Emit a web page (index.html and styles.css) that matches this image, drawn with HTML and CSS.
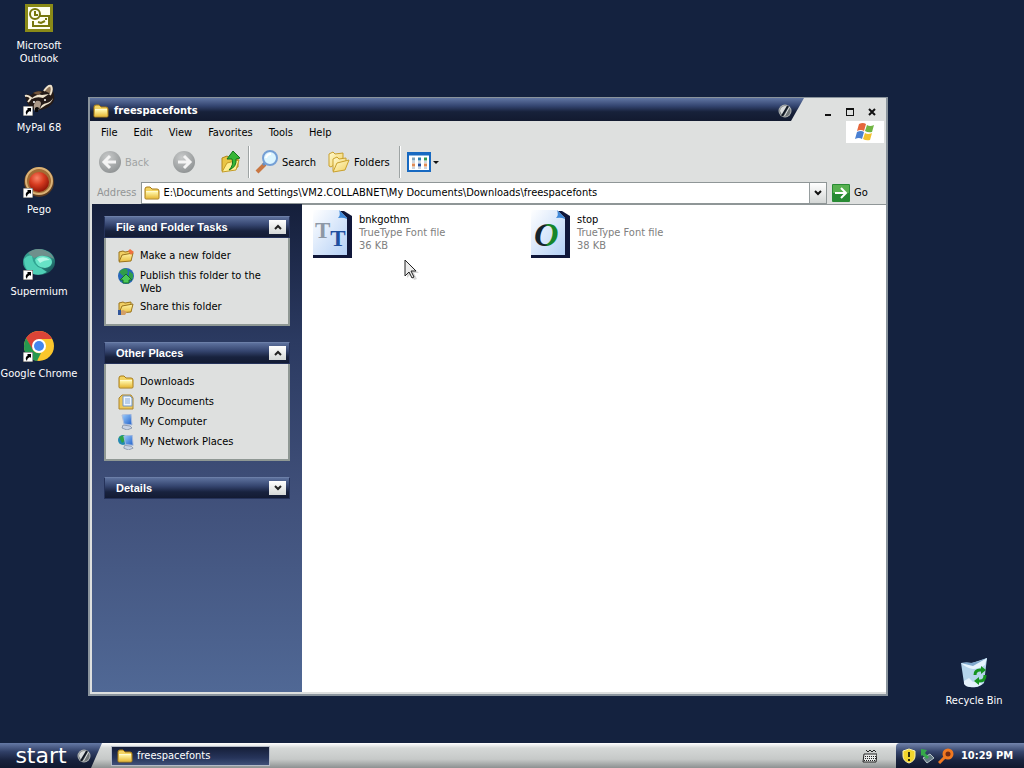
FILE: index.html
```
<!DOCTYPE html>
<html lang="en">
<head>
    <meta charset="UTF-8">
    <meta name="viewport" content="width=device-width, initial-scale=1.0">
    <title>freespacefonts</title>
    <link rel="stylesheet" href="styles.css">
</head>
<body>

    <!-- shared icons -->
    <svg class="defs" width="0" height="0" aria-hidden="true">
        <defs>
            <linearGradient id="gold" x1="0" y1="0" x2="0" y2="1">
                <stop offset="0" stop-color="#fff6a8"/><stop offset="1" stop-color="#e9bd3f"/>
            </linearGradient>
            <linearGradient id="pale-gold" x1="0" y1="0" x2="1" y2="1">
                <stop offset="0" stop-color="#fffbd2"/><stop offset="1" stop-color="#f2cf5c"/>
            </linearGradient>
            <linearGradient id="page" x1="0" y1="0" x2="1" y2="1">
                <stop offset="0" stop-color="#ffffff"/><stop offset="1" stop-color="#b4d0f6"/>
            </linearGradient>
            <radialGradient id="grey" cx=".4" cy=".3" r=".8">
                <stop offset="0" stop-color="#c9cbcb"/><stop offset="1" stop-color="#898d8e"/>
            </radialGradient>
            <radialGradient id="red" cx=".4" cy=".3" r=".7">
                <stop offset="0" stop-color="#f98468"/><stop offset=".5" stop-color="#d63b20"/><stop offset="1" stop-color="#8f1608"/>
            </radialGradient>
            <linearGradient id="teal" x1="0" y1="0" x2="1" y2="1">
                <stop offset="0" stop-color="#3a9489"/><stop offset=".5" stop-color="#2fa794"/><stop offset="1" stop-color="#143a45"/>
            </linearGradient>
            <linearGradient id="screen" x1="0" y1="0" x2="1" y2="1">
                <stop offset="0" stop-color="#9ed0ff"/><stop offset="1" stop-color="#2160c8"/>
            </linearGradient>
        </defs>
        <symbol id="folder" viewBox="0 0 16 16">
            <path d="M1 4q0-2 2-2h3l2 2h5q2 0 2 2v7q0 1-1 1H2q-1 0-1-1z" fill="#f3d463" stroke="#a87b16"/>
            <path d="M2 7h12v6H2z" fill="url(#gold)"/>
            <path d="M2 6.500h12" stroke="#fffbd0"/>
        </symbol>
        <symbol id="open-folder" viewBox="0 0 16 16">
            <path d="M1 13V4l4-1 2 1 6-1v4" fill="#f0cf63" stroke="#9b741b"/>
            <path d="M1 14l3-7 11-2-2 8z" fill="url(#gold)" stroke="#9b741b"/>
        </symbol>
        <symbol id="computer" viewBox="0 0 16 16">
            <path d="M4 1l9-1 1 11-8-1z" fill="url(#screen)" stroke="#a9bbdc"/>
            <path d="M5 11l7 1 2 2-5 2-5-2z" fill="#c9d3e4" stroke="#75849c" stroke-width=".7"/>
        </symbol>
        <symbol id="shortcut" viewBox="0 0 10 10">
            <path d="M0 0h10v10H0z" fill="#fff" stroke="#444"/>
            <path d="M4 2h4v4L7 5Q4 6 4 9 1 6 5 3z" fill="#000"/>
        </symbol>
        <symbol id="orb" viewBox="0 0 14 14">
            <circle cx="7" cy="7" r="6.500" fill="#aeb2b2"/>
            <circle cx="7" cy="7" r="5.500" fill="#717779"/>
            <path d="M2 7a5 5 0 0 1 8-4L4 11z" fill="#d9dcdc"/>
            <path d="M10 2l-6 10" stroke="#101722" stroke-width="2"/>
            <path d="M11.500 3l-5 9" stroke="#dfe2e2"/>
        </symbol>
        <symbol id="font-page" viewBox="0 0 40 48">
            <path d="M1 1h31l8 5v42H1z" fill="#10173a"/>
            <path d="M1 0h26l8 8v37H1z" fill="url(#page)"/>
            <path d="M27 0q2 5-1 8 5-1 9 1V8z" fill="#3f88d8"/>
        </symbol>
    </svg>

    <main class="desktop">
        <nav class="shortcuts" aria-label="Desktop">
            <a class="shortcut" href="#outlook">
                <svg width="32" height="32" viewBox="0 0 32 32">
                    <path d="M2 2h28v28H2z" fill="#8a8a17"/>
                    <path d="M5 5h22v22H5z" fill="#fffff0"/>
                    <path d="M16 14h10v10H10v-5" fill="none" stroke="#77770c" stroke-width="2"/>
                    <circle cx="12" cy="12" r="5" fill="#fffff0" stroke="#77770c" stroke-width="2"/>
                    <path d="M12 9v4h3M15 20l3 1 4-2M22 17h2" fill="none" stroke="#77770c" stroke-width="2"/>
                </svg>
                <span>Microsoft Outlook</span>
            </a>
            <a class="shortcut" href="#mypal">
                <svg width="32" height="32" viewBox="0 0 32 32">
                    <path d="M2 12q2-3 6-1 5-5 12-4 3-5 7-6 4 0 3 6 3 9-1 13-6 6-14 6-9-1-11-8z" fill="#241a17"/>
                    <path d="M22 7q3-5 6-5 2 3 0 8z" fill="#8e7458"/>
                    <path d="M21 7q4-6 7-5 2 4-1 9M2 12q3-1 6 2l-3 4" fill="none" stroke="#efe3cd" stroke-width="2"/>
                    <path d="M9 14q6-5 10-3l7-1-6 4q-6-2-11 1z" fill="#efe3cd"/>
                    <path d="M30 14q-1 5-7 7l-6 4q1-5 7-6 4-1 6-5z" fill="#efe3cd"/>
                    <path d="M10 9q5-3 9-1l-4 3z" fill="#74563c"/>
                    <path d="M13 17q5-1 5 3l-2 6-4 1q-3-5 1-10z" fill="#ab9887"/>
                    <path d="M12 24q2-2 4 0l-1 4h-3z" fill="#0b0909"/>
                    <circle cx="22" cy="16" r="1" fill="#fff"/><circle cx="11" cy="18" r="1" fill="#fff"/>
                    <use href="#shortcut" x="0" y="22" width="10" height="10"/>
                </svg>
                <span>MyPal 68</span>
            </a>
            <a class="shortcut" href="#pego">
                <svg width="32" height="32" viewBox="0 0 32 32">
                    <circle cx="16" cy="16" r="15" fill="#5b3b21"/>
                    <circle cx="16" cy="15" r="13" fill="#a16c35" stroke="#dab276" stroke-width="2"/>
                    <circle cx="16" cy="16" r="10" fill="url(#red)"/>
                    <use href="#shortcut" x="0" y="22" width="10" height="10"/>
                </svg>
                <span>Pego</span>
            </a>
            <a class="shortcut" href="#supermium">
                <svg width="32" height="32" viewBox="0 0 32 32">
                    <ellipse cx="16" cy="14" rx="16" ry="13" fill="url(#teal)"/>
                    <path d="M5 5q10-8 22 0 3 3 4 6-9-6-20-1z" fill="#6f8f8c"/>
                    <path d="M1 11q4-5 8-3 1 10 9 12l6 4q-8 5-16 1-7-4-7-14z" fill="#4fcfb5"/>
                    <path d="M12 12q3-5 9-4 8 1 8 6 0 5-7 6-9-1-10-8z" fill="#67e3c6"/>
                    <path d="M14 11q7-4 13 1-6 0-10 3z" fill="#b1f7e6"/>
                    <use href="#shortcut" x="0" y="22" width="10" height="10"/>
                </svg>
                <span>Supermium</span>
            </a>
            <a class="shortcut" href="#chrome">
                <svg width="32" height="32" viewBox="0 0 32 32">
                    <circle cx="16" cy="16" r="15" fill="#fbc62c"/>
                    <path d="M3 8Q8 1 16 1q9 0 13 8H16l-7 11z" fill="#dc4437"/>
                    <path d="M3 8l7 12q3 4 8 3l-4 8Q1 29 1 16q0-4 2-8z" fill="#269950"/>
                    <circle cx="16" cy="16" r="7" fill="#fff"/><circle cx="16" cy="16" r="5" fill="#4386ef"/>
                    <use href="#shortcut" x="0" y="22" width="10" height="10"/>
                </svg>
                <span>Google Chrome</span>
            </a>
        </nav>

        <a class="shortcut recycle" href="#recycle">
            <svg width="32" height="32" viewBox="0 0 32 32">
                <path d="M3 6q6-1 11 0l9-3 6-2-3 25q-5 5-12 4-6 0-8-4z" fill="#b5d5ec"/>
                <path d="M3 6q5-1 10 0 8-1 16-5l-2 5q-8 4-12 4-6 0-12-4z" fill="#7fa8cd"/>
                <path d="M3 6l12 3 14-8-2 7q-6 4-12 4-7-1-12-6z" fill="#e6f5ff"/>
                <path d="M6 24l5-3 4 4 5-2 4 4q-5 4-12 3-4 0-6-3z" fill="#e3f1fb"/>
                <path d="M17 18q0-5 5-5h2M27 18q0 6-5 6h-2" fill="none" stroke="#159420" stroke-width="3"/>
                <path d="M23 9l5 4-5 4zM21 20l-5 4 5 4z" fill="#159420"/>
            </svg>
            <span>Recycle Bin</span>
        </a>

        <section class="window">
            <header class="titlebar">
                <div class="title">
                    <svg width="16" height="16"><use href="#folder"/></svg>
                    <h1>freespacefonts</h1>
                    <svg class="title-orb" width="14" height="14"><use href="#orb"/></svg>
                </div>
                <div class="controls">
                    <button aria-label="Minimize"><svg width="8" height="8"><path d="M1 7h6" stroke="#111" stroke-width="2"/></svg></button>
                    <button aria-label="Maximize"><svg width="8" height="8"><path d="M0 0h8v8H0zM1 2v5h6V2z" fill="#111" fill-rule="evenodd"/></svg></button>
                    <button aria-label="Close"><svg width="8" height="8"><path d="M1 1l6 6M7 1L1 7" stroke="#111" stroke-width="2"/></svg></button>
                </div>
            </header>

            <div class="menubar">
                <button>File</button>
                <button>Edit</button>
                <button>View</button>
                <button>Favorites</button>
                <button>Tools</button>
                <button>Help</button>
                <div class="flag">
                    <svg width="20" height="18" viewBox="0 0 20 18">
                        <path d="M4 1q4-2 7 0L9 8Q6 6 2 8z" fill="#e5673c"/>
                        <path d="M12 2q3 2 7 0l-2 7q-4 1-7-1z" fill="#71b543"/>
                        <path d="M2 9q4-2 7 0l-2 7q-3-2-7 0z" fill="#4a80d2"/>
                        <path d="M10 10q3 2 7 0l-2 7q-4 1-7-1z" fill="#f2c12f"/>
                    </svg>
                </div>
            </div>

            <div class="toolbar">
                <button class="tool back" disabled>
                    <svg width="24" height="24" viewBox="0 0 24 24"><circle cx="12" cy="12" r="11" fill="url(#grey)"/><path d="M18 12H7M12 6l-6 6 6 6" fill="none" stroke="#f4f4f4" stroke-width="3"/></svg>
                    Back
                </button>
                <button class="tool forward" disabled aria-label="Forward">
                    <svg width="24" height="24" viewBox="0 0 24 24"><circle cx="12" cy="12" r="11" fill="url(#grey)"/><path d="M6 12h11M12 6l6 6-6 6" fill="none" stroke="#f4f4f4" stroke-width="3"/></svg>
                </button>
                <button class="tool up" aria-label="Up">
                    <svg width="22" height="24" viewBox="0 0 22 24">
                        <path d="M2 8l5-2 3 2 8-2v11L2 21z" fill="#e9c545" stroke="#b18618"/>
                        <path d="M2 22l5-9 12-3-3 10z" fill="#fff091" stroke="#c49c27"/>
                        <path d="M9 20q5-5 3-11H7l6-8 7 7-4 1q1 8-7 11z" fill="#36b636" stroke="#13751d"/>
                    </svg>
                </button>
                <span class="separator"></span>
                <button class="tool">
                    <svg width="24" height="24" viewBox="0 0 24 24"><path d="M2 22l8-8" stroke="#c97742" stroke-width="4"/><path d="M8 15l3-3" stroke="#678fc2" stroke-width="3"/><circle cx="15" cy="8" r="7" fill="#dcf5ff" stroke="#749fd5" stroke-width="2"/><path d="M11 8q1-4 5-4" fill="none" stroke="#fff" stroke-width="2"/></svg>
                    Search
                </button>
                <button class="tool folders">
                    <svg width="24" height="24" viewBox="0 0 24 24">
                        <path d="M2 16V4l4-2 2 2 8-1v5L4 17z" fill="url(#pale-gold)" stroke="#c9a02c"/>
                        <path d="M6 21V9l4-2 2 2 7-1v4" fill="url(#pale-gold)" stroke="#c9a02c"/>
                        <path d="M6 22l4-9 12-3-4 10z" fill="url(#pale-gold)" stroke="#c9a02c"/>
                    </svg>
                    Folders
                </button>
                <span class="separator"></span>
                <button class="tool views" aria-label="Views">
                    <svg width="32" height="20" viewBox="0 0 32 20">
                        <path d="M1 1h22v18H1z" fill="#fff" stroke="#1769c1" stroke-width="2"/><path d="M0 2h24" stroke="#1769c1" stroke-width="3"/>
                        <path d="M5 7h3" stroke="#7fa3bb" stroke-width="3"/><path d="M11 7h3" stroke="#2b7fb2" stroke-width="3"/><path d="M17 7h3" stroke="#2d9850" stroke-width="3"/>
                        <path d="M5 13h3M17 13h3" stroke="#e08c57" stroke-width="3"/><path d="M11 13h3" stroke="#214c9f" stroke-width="3"/>
                        <path d="M5 10h3M11 10h3M17 10h3M5 16h3M11 16h3M17 16h3" stroke="#9aaabd"/>
                        <path d="M26 9h6l-3 3z" fill="#111"/>
                    </svg>
                </button>
            </div>

            <form class="address">
                <label for="path">Address</label>
                <div class="combo">
                    <svg width="16" height="16"><use href="#folder"/></svg>
                    <input id="path" type="text" value="E:\Documents and Settings\VM2.COLLABNET\My Documents\Downloads\freespacefonts">
                    <button type="button" aria-label="Show addresses"><svg width="8" height="8"><path d="M1 2l3 3 3-3" fill="none" stroke="#111" stroke-width="2"/></svg></button>
                </div>
                <button class="go" type="button">
                    <svg width="18" height="18" viewBox="0 0 18 18"><rect width="18" height="18" rx="1" fill="#288b34"/><path d="M1 1h16v8H1z" fill="#57b04f"/><path d="M3 9h11M9 4l5 5-5 5" fill="none" stroke="#fff" stroke-width="2"/></svg>
                    Go
                </button>
            </form>

            <div class="content">
                <aside class="tasks">
                    <section class="panel">
                        <header>
                            <h2>File and Folder Tasks</h2>
                            <button aria-label="Collapse"><svg width="8" height="8"><path d="M1 6l3-3 3 3" fill="none" stroke="#222" stroke-width="2"/></svg></button>
                        </header>
                        <ul>
                            <li><svg width="16" height="16"><use href="#open-folder"/><path d="M10 3l2-2 4 3-3 3z" fill="#ee7040"/></svg><a href="#new">Make a new folder</a></li>
                            <li><svg width="16" height="16"><circle cx="8" cy="8" r="8" fill="#2666b9"/><path d="M1 4q4-5 8-3l1 4-5 3zM11 3l4 3v5l-4-1z" fill="#2f9d4a"/><path d="M8 6l6 6h-3v3H5v-3H2z" fill="#4ac957" stroke="#167029"/></svg><a href="#publish">Publish this folder to the Web</a></li>
                            <li><svg width="16" height="16"><use href="#open-folder"/><path d="M0 13l5-2 4 2-2 3H0z" fill="#d3a066"/><path d="M0 11h3v5H0z" fill="#31569a"/></svg><a href="#share">Share this folder</a></li>
                        </ul>
                    </section>

                    <section class="panel">
                        <header>
                            <h2>Other Places</h2>
                            <button aria-label="Collapse"><svg width="8" height="8"><path d="M1 6l3-3 3 3" fill="none" stroke="#222" stroke-width="2"/></svg></button>
                        </header>
                        <ul>
                            <li><svg width="16" height="16"><use href="#folder"/></svg><a href="#downloads">Downloads</a></li>
                            <li><svg width="16" height="16"><path d="M1 4l3-3h9l2 3v11H1z" fill="#edc85b" stroke="#ac852f"/><path d="M5 2h7l2 2v8H5z" fill="#eef6ff" stroke="#7297c7"/><path d="M7 5h5M7 7h5M7 9h5" stroke="#83a8d8"/></svg><a href="#documents">My Documents</a></li>
                            <li><svg width="16" height="16"><use href="#computer"/></svg><a href="#computer">My Computer</a></li>
                            <li><svg width="16" height="16"><circle cx="5" cy="6" r="5" fill="#248ab2"/><path d="M1 3l5-2 2 5-4 3z" fill="#2da447"/><use href="#computer" x="2" y="1" width="15" height="15"/></svg><a href="#network">My Network Places</a></li>
                        </ul>
                    </section>

                    <section class="panel">
                        <header>
                            <h2>Details</h2>
                            <button aria-label="Expand"><svg width="8" height="8"><path d="M1 2l3 3 3-3" fill="none" stroke="#222" stroke-width="2"/></svg></button>
                        </header>
                    </section>
                </aside>

                <div class="files">
                    <a class="file" href="#bnkgothm">
                        <svg width="40" height="48" viewBox="0 0 40 48">
                            <use href="#font-page"/>
                            <text x="3" y="28" class="glyph"><tspan class="glyph-grey">T</tspan><tspan class="glyph-blue" dy="8">T</tspan></text>
                        </svg>
                        <span class="info"><strong>bnkgothm</strong><span>TrueType Font file</span><span>36 KB</span></span>
                    </a>
                    <a class="file" href="#stop">
                        <svg width="40" height="48" viewBox="0 0 40 48">
                            <defs><linearGradient id="oh"><stop offset=".45" stop-color="#14232c"/><stop offset=".55" stop-color="#16852b"/></linearGradient></defs>
                            <use href="#font-page"/>
                            <text x="4" y="36" class="glyph-o" fill="url(#oh)">O</text>
                        </svg>
                        <span class="info"><strong>stop</strong><span>TrueType Font file</span><span>38 KB</span></span>
                    </a>
                </div>
            </div>
        </section>

        <svg class="cursor" width="16" height="22" viewBox="0 0 16 22">
            <path d="M3 3v16l4-4 3 6 3-1-3-6h5z" fill="#bbb" opacity=".6"/>
            <path d="M1 1v16l4-4 3 6 2-1-3-6h5z" fill="#ececec" stroke="#222"/>
        </svg>
    </main>

    <footer class="taskbar">
        <button class="start"><span>start</span><svg width="14" height="14"><use href="#orb"/></svg></button>
        <button class="task"><svg width="16" height="16"><use href="#folder"/></svg>freespacefonts</button>
        <svg class="keyboard" width="15" height="14" viewBox="0 0 15 14">
            <path d="M4 1l2 2 2-2 2 2 2-2 2 2" fill="none" stroke="#222"/>
            <path d="M2 5h13l-1 8H1z" fill="#e9ebea" stroke="#222"/>
            <path d="M3 7.500h11M3 9.500h11M2 11.500h11" stroke="#222" stroke-dasharray="1 1"/>
        </svg>
        <div class="tray">
            <svg width="14" height="16" viewBox="0 0 14 16"><path d="M7 1l6 2v5q0 5-6 7-6-2-6-7V3z" fill="#f2d52d" stroke="#fff5ae"/><path d="M7 4v5M7 11v2" stroke="#31300b" stroke-width="2"/></svg>
            <svg width="14" height="16" viewBox="0 0 14 16"><path d="M3 10l7-4 4 4-7 5z" fill="#647a85" stroke="#b9c6c9"/><path d="M1 1l6 1-2 3 4 4-2 2-5-4-1 1z" fill="#36a84a"/></svg>
            <svg width="16" height="16" viewBox="0 0 16 16"><circle cx="10" cy="6" r="4" fill="#742b13" stroke="#f17820" stroke-width="3"/><path d="M7 9l-6 6" stroke="#f17820" stroke-width="3"/></svg>
            <time>10:29 PM</time>
        </div>
    </footer>

</body>
</html>
```
FILE: styles.css
```
* {
    margin: 0;
    padding: 0;
    box-sizing: border-box;
}

body {
    min-height: 100vh;
    display: flex;
    flex-direction: column;
    background: #14223f;
    font-family: "DejaVu Sans Condensed", "Liberation Sans", sans-serif;
    font-size: 11px;
    line-height: 13px;
    color: #000;
}

button, input {
    font: inherit;
    color: inherit;
    border: 0;
    background: none;
}

a {
    color: inherit;
    text-decoration: none;
}

svg {
    display: block;
    flex-shrink: 0;
}

.defs {
    position: absolute;
}

.desktop {
    position: relative;
    flex: 1;
    overflow: hidden;
}

.shortcuts {
    width: 78px;
    padding-top: 2px;
}

.shortcut {
    height: 82px;
    display: flex;
    flex-direction: column;
    align-items: center;
    gap: 5px;
    color: #fff;
    text-align: center;
}

.recycle {
    position: absolute;
    right: 10px;
    bottom: 4px;
    width: 80px;
}

/* explorer window */
.window {
    position: absolute;
    left: 88px;
    right: 136px;
    top: 97px;
    bottom: 47px;
    display: flex;
    flex-direction: column;
    background: #dee0df;
    border: 2px solid #8a949d;
    border-top-width: 1px;
}

.titlebar {
    display: flex;
    height: 23px;
    flex-shrink: 0;
}

.title {
    flex: 1;
    display: flex;
    align-items: center;
    gap: 5px;
    padding: 2px 12px 0 3px;
    background: linear-gradient(#6176a3, #33446f 35%, #17213a 60%, #121a30);
    clip-path: polygon(0 0, 100% 0, calc(100% - 13px) 100%, 0 100%);
}

.title h1 {
    font-size: 11px;
    line-height: 13px;
    color: #fff;
}

.title-orb {
    margin-left: auto;
}

.controls {
    width: 82px;
    display: flex;
    justify-content: flex-end;
    align-items: center;
    padding: 4px 6px 0 0;
    gap: 6px;
}

.controls button {
    width: 16px;
    height: 16px;
    display: grid;
    place-items: center;
}

.menubar {
    display: flex;
    height: 22px;
    flex-shrink: 0;
    padding-left: 3px;
}

.menubar button {
    padding: 0 8px;
}

.flag {
    width: 38px;
    margin: 0 2px 0 auto;
    display: grid;
    place-items: center;
    background: #fff;
}

.toolbar {
    height: 38px;
    flex-shrink: 0;
    display: flex;
    align-items: center;
    padding-left: 8px;
}

.tool {
    display: flex;
    align-items: center;
    gap: 3px;
}

.tool:disabled {
    color: #a0a3a3;
}

.forward {
    margin-left: 23px;
}

.up {
    margin-left: 24px;
}

.folders {
    margin-left: 11px;
}

.separator {
    width: 2px;
    height: 32px;
    margin: 0 5px 0 6px;
    border-left: 1px solid #9ea4a4;
    border-right: 1px solid #fff;
}

.toolbar .folders + .separator {
    margin: 0 6px 0 9px;
}

.address {
    height: 23px;
    flex-shrink: 0;
    display: flex;
    align-items: center;
    padding-left: 7px;
    gap: 5px;
    color: #929595;
}

.combo {
    flex: 1;
    height: 22px;
    display: flex;
    align-items: center;
    padding-left: 2px;
    gap: 3px;
    background: #fff;
    border: 1px solid #8f9697;
    color: #000;
}

.combo input {
    flex: 1;
    min-width: 0;
    outline: 0;
}

.combo button {
    width: 17px;
    height: 20px;
    display: grid;
    place-items: center;
    background: linear-gradient(#fff, #d4d7d6);
    border-left: 1px solid #969d9e;
}

.go {
    width: 54px;
    display: flex;
    align-items: center;
    gap: 4px;
    color: #000;
}

.content {
    flex: 1;
    min-height: 0;
    display: flex;
    margin: 0 0 2px 2px;
}

.tasks {
    width: 210px;
    flex-shrink: 0;
    display: flex;
    flex-direction: column;
    gap: 16px;
    padding: 12px;
    background: linear-gradient(#151f3b, #2b3a61 28%, #40507a 60%, #506895);
}

.panel header {
    height: 22px;
    display: flex;
    align-items: center;
    justify-content: space-between;
    padding: 0 3px 0 11px;
    background: linear-gradient(#5d719d, #35456f 40%, #18223e 70%, #131b33);
    border: 1px solid #25325a;
    border-top-color: #6c7fa8;
}

.panel h2 {
    font-family: "Liberation Sans", sans-serif;
    font-size: 11px;
    color: #fff;
}

.panel header button {
    width: 17px;
    height: 14px;
    display: grid;
    place-items: center;
    background: linear-gradient(#fff, #d5d8d7);
}

.panel ul {
    list-style: none;
    display: flex;
    flex-direction: column;
    gap: 4px;
    padding: 10px 10px 9px 12px;
    background: #dee0df;
    border: 2px solid #8f9894;
    border-top: 0;
}

.panel li {
    display: flex;
    gap: 6px;
}

.panel li a {
    padding-top: 1px;
}

.files {
    flex: 1;
    display: grid;
    grid-template-columns: repeat(auto-fill, 218px);
    align-content: start;
    padding: 5px 10px;
    background: #fff;
    border-top: 1px solid #8f9697;
}

.file {
    display: flex;
    gap: 7px;
}

.info {
    display: flex;
    flex-direction: column;
    padding-top: 3px;
    color: #808080;
}

.info strong {
    font-weight: normal;
    color: #000;
}

.glyph {
    font: bold 23px "Liberation Serif", serif;
}

.glyph-grey {
    fill: #8d98a6;
}

.glyph-blue {
    fill: #1f4f9f;
}

.glyph-o {
    font: italic bold 34px "Liberation Serif", serif;
}

.cursor {
    position: absolute;
    left: 404px;
    top: 259px;
}

/* taskbar */
.taskbar {
    height: 25px;
    display: flex;
    align-items: center;
    background: linear-gradient(#fff, #d5d8d7 20%, #c6c9c8 65%, #8d9191);
}

.start {
    width: 102px;
    height: 25px;
    display: flex;
    align-items: center;
    gap: 8px;
    padding-left: 13px;
    color: #fff;
    background: linear-gradient(#6579a5, #303f66 35%, #17213c 70%, #10182e);
    clip-path: polygon(0 0, 100% 0, calc(100% - 11px) 100%, 0 100%);
}

.start span {
    width: 56px;
    font-family: "DejaVu Sans", sans-serif;
    font-size: 22px;
    line-height: 22px;
}

.task {
    width: 159px;
    height: 20px;
    margin-left: 9px;
    padding-left: 5px;
    display: flex;
    align-items: center;
    gap: 4px;
    color: #fff;
    background: linear-gradient(#151e38, #26345a 60%, #405078);
    border: 1px solid #b4bbc7;
}

.keyboard {
    margin: 0 19px 0 auto;
}

.tray {
    height: 25px;
    display: flex;
    align-items: center;
    gap: 4px;
    padding: 0 11px 0 6px;
    color: #fff;
    background: linear-gradient(#7385ad, #35446b 35%, #19233e 70%, #10182e);
    border-radius: 4px 0 0 0;
}

.tray time {
    margin-left: 3px;
    font-weight: bold;
}
```
